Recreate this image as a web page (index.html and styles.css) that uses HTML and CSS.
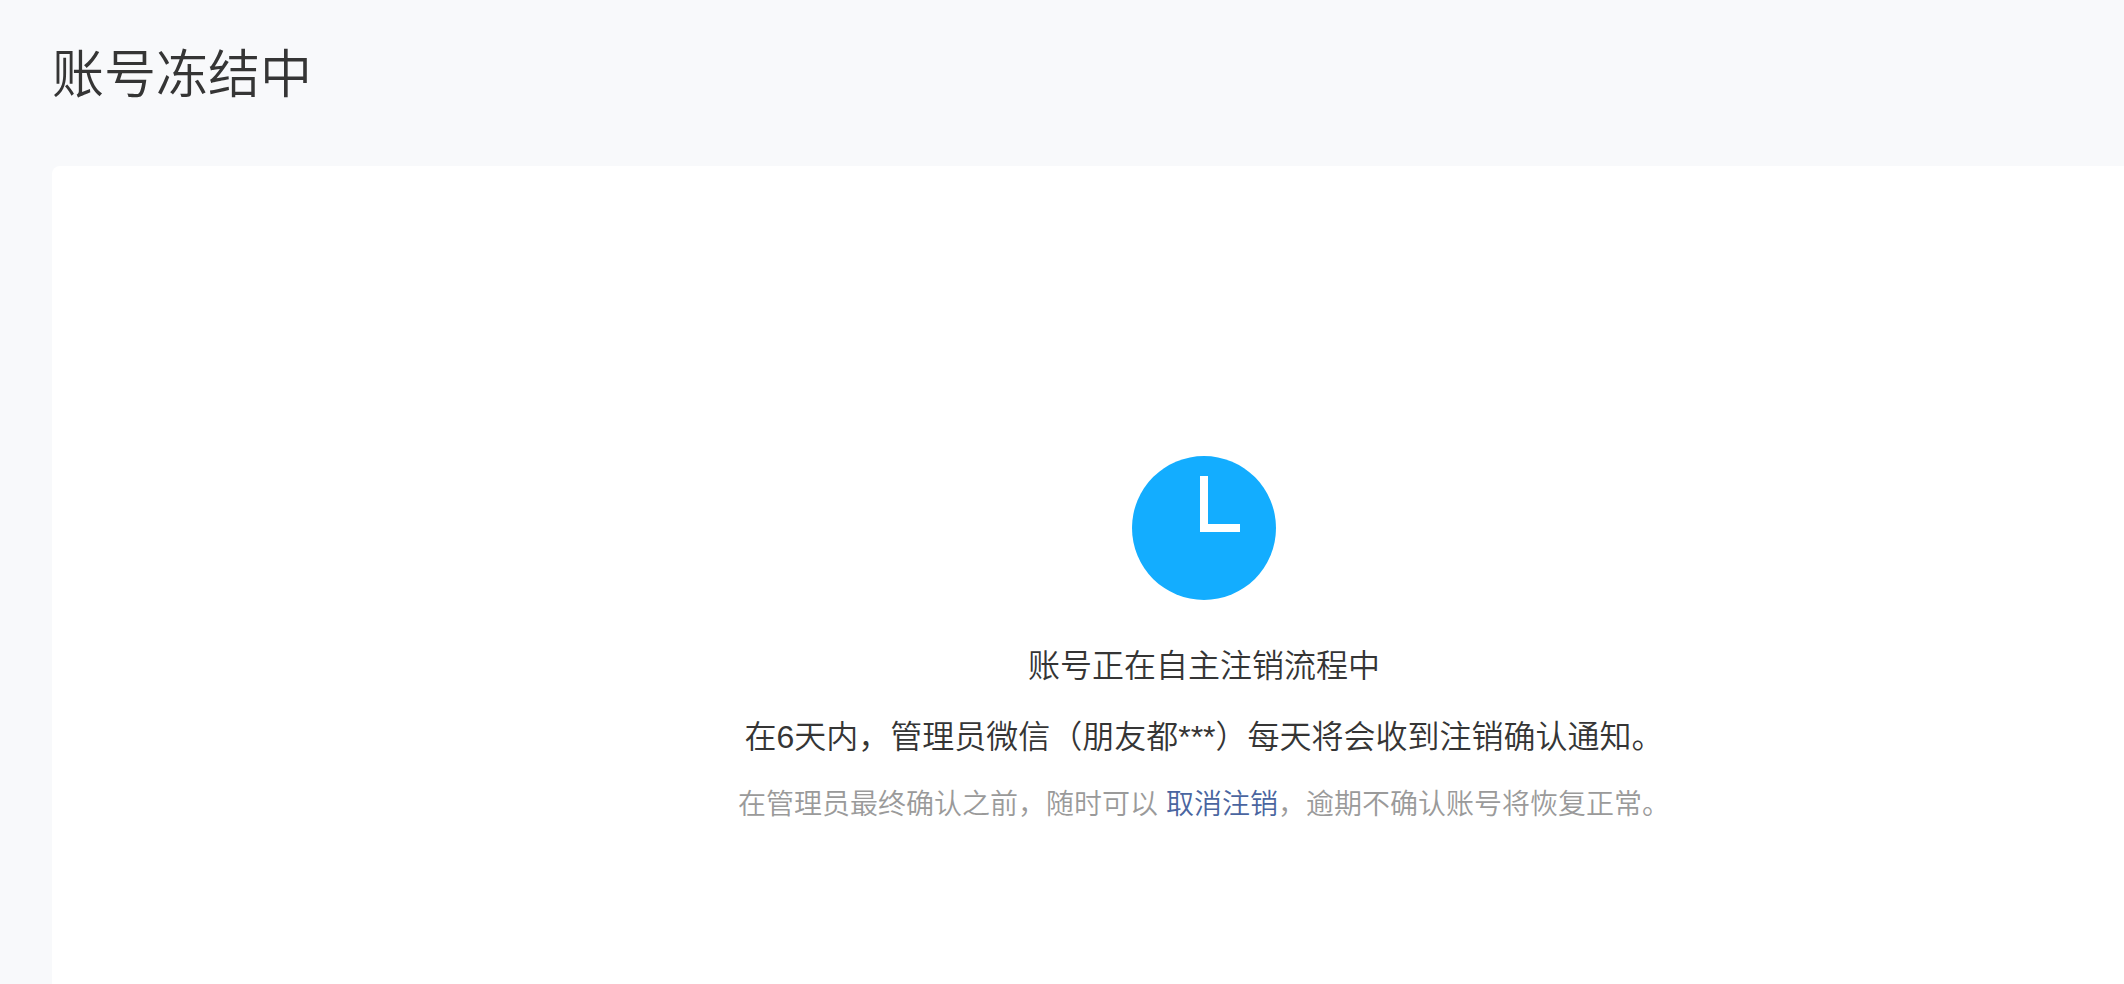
FILE: index.html
```html
<!DOCTYPE html>
<html lang="zh-CN">
<head>
    <meta charset="UTF-8">
    <meta name="viewport" content="width=device-width, initial-scale=1.0">
    <title>账号冻结中</title>
    <link rel="stylesheet" href="styles.css">
</head>
<body>
    <header class="page-header">
        <h1 class="page-title">账号冻结中</h1>
    </header>
    <main class="panel">
        <svg class="status-icon" viewBox="0 0 144 144" aria-hidden="true">
            <circle cx="72" cy="72" r="72" fill="#13adff"/>
            <path d="M68 20h8v48h32v8H68z" fill="#fff"/>
        </svg>
        <h2 class="status-title">账号正在自主注销流程中</h2>
        <p class="status-desc">在6天内，管理员微信（朋友都***）每天将会收到注销确认通知。</p>
        <p class="status-tips">在管理员最终确认之前，随时可以 <a href="#">取消注销</a>，逾期不确认账号将恢复正常。</p>
    </main>
</body>
</html>
```
FILE: styles.css
```css
* {
    box-sizing: border-box;
}
body {
    display: flex;
    flex-direction: column;
    min-height: 100vh;
    margin: 0;
    padding-left: 52px;
    background-color: #f8f9fb;
    color: #353535;
    font-family: "Liberation Sans", "Noto Sans CJK SC", sans-serif;
}
h1,
h2,
p {
    margin: 0;
    font-weight: 350;
}
.page-header {
    padding: 35px 0 51px;
}
.page-title {
    font-size: 52px;
    line-height: 80px;
}
.panel {
    flex: 1;
    display: flex;
    flex-direction: column;
    align-items: center;
    padding: 290px 0 140px 232px;
    border-radius: 8px 0 0 0;
    background-color: #fff;
    text-align: center;
}
.status-icon {
    width: 144px;
    height: 144px;
    margin-bottom: 42px;
}
.status-title,
.status-desc {
    font-size: 32px;
    line-height: 48px;
}
.status-desc {
    margin-top: 23px;
}
.status-tips {
    margin-top: 22px;
    color: #9a9a9a;
    font-size: 28px;
    line-height: 44px;
}
.status-tips a {
    color: #4a65a0;
    text-decoration: none;
}
.status-tips a:hover {
    text-decoration: underline;
}
```
